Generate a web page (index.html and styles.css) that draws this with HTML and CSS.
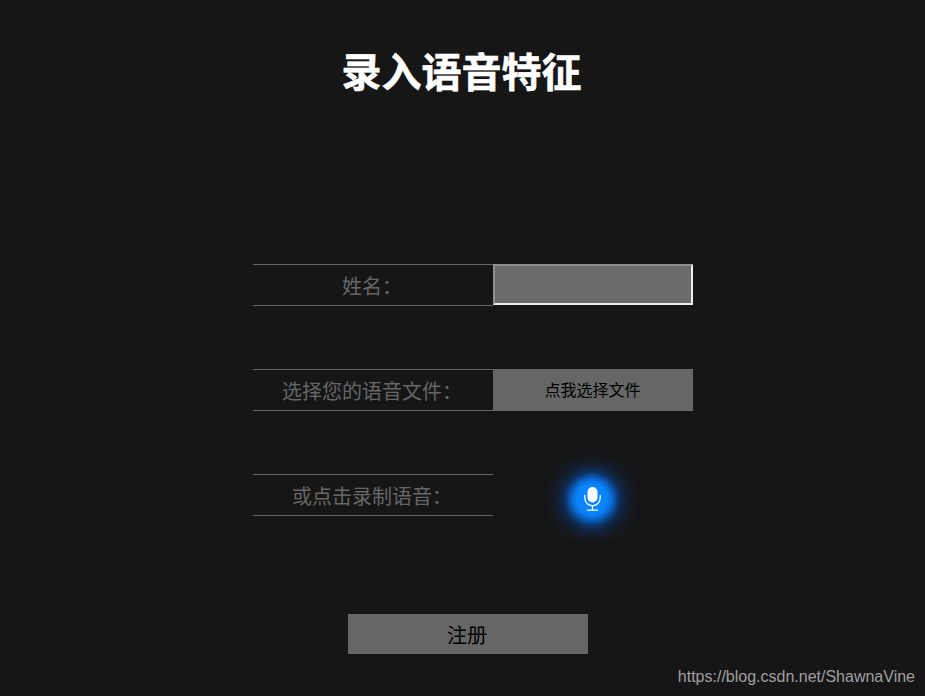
FILE: index.html
```html
<!DOCTYPE html>
<html lang="zh-CN">
<head>
    <meta charset="UTF-8">
    <title>录入语音特征</title>
    <link rel="stylesheet" href="styles.css">
</head>
<body>
    <div class="container">
        <h1 class="title">录入语音特征</h1>

        <div class="form">
            <div class="row">
                <label class="label">姓名：</label>
                <input class="name-input" type="text">
            </div>
            <div class="row">
                <label class="label">选择您的语音文件：</label>
                <div class="file-btn">点我选择文件</div>
            </div>
            <div class="row">
                <label class="label">或点击录制语音：</label>
                <div class="mic-cell">
                    <div class="mic">
                        <svg viewBox="0 0 17 24" width="17" height="24" fill="none" stroke="#fff" stroke-width="1.3" stroke-linecap="round">
                            <rect x="3.5" y="0" width="10" height="15.5" rx="5" fill="#fff" stroke="none"/>
                            <path d="M0.8 8.5v2.5a7.7 7.7 0 0 0 15.4 0V8.5"/>
                            <path d="M8.5 18.8v4.2M3.5 23.2h10"/>
                        </svg>
                    </div>
                </div>
            </div>
        </div>

        <button class="submit">注册</button>
    </div>

    <!-- watermark -->
    <div class="watermark">https://blog.csdn.net/ShawnaVine</div>
</body>
</html>
```

FILE: styles.css
```css
* {
    margin: 0;
    padding: 0;
    box-sizing: border-box;
}

html, body {
    height: 696px;
    overflow: hidden;
}

body {
    background: #161616;
    font-family: "Liberation Sans", "Noto Sans CJK SC", sans-serif;
    position: relative;
}

.container {
    display: flex;
    flex-direction: column;
    align-items: center;
    padding-top: 46px;
}

.title {
    width: 100%;
    padding-right: 2px;
    text-align: center;
    color: #fff;
    font-size: 40px;
    line-height: 54px;
    font-weight: 700;
    -webkit-text-stroke: 0.6px #fff;
}

.form {
    width: 440px;
    margin-top: 164px;
    margin-left: 21px;
    display: flex;
    flex-direction: column;
    gap: 63px;
}

.row {
    display: flex;
    height: 42px;
}

.label {
    width: 240px;
    padding: 3px 2px 0 0;
    border-top: 1px solid #666;
    border-bottom: 1px solid #666;
    color: #666;
    font-size: 20px;
    line-height: 38px;
    text-align: center;
}

.name-input {
    width: 200px;
    height: 41px;
    background: #6b6b6b;
    border: 2px solid;
    border-color: #8f8f8f #efefef #efefef #8f8f8f;
    outline: none;
}

.file-btn {
    width: 200px;
    padding: 1px 1px 0 0;
    background: #666;
    color: #000;
    font-size: 16px;
    line-height: 42px;
    text-align: center;
}

.mic-cell {
    width: 200px;
    padding: 8px 2px 0 0;
    display: flex;
    align-items: center;
    justify-content: center;
}

.mic {
    width: 32px;
    height: 32px;
    border-radius: 50%;
    background: #0a84ff;
    box-shadow: 0 0 8px 6px #0a84ff, 0 0 20px 13px rgba(0, 95, 235, 0.6);
    display: flex;
    align-items: center;
    justify-content: center;
}

.submit {
    width: 240px;
    height: 40px;
    margin-top: 98px;
    margin-left: 11px;
    padding-right: 2px;
    background: #666;
    border: none;
    color: #000;
    font-family: inherit;
    font-size: 20px;
}

.watermark {
    position: absolute;
    right: 10px;
    bottom: 9px;
    color: #a0a0a0;
    font-size: 16px;
    line-height: 20px;
}
```
